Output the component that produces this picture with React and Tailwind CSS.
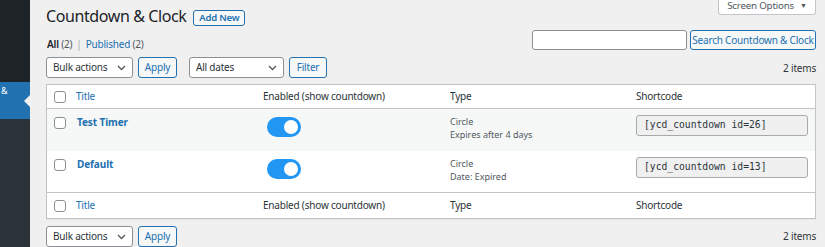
import React from "react";

const font = { fontFamily: '"Noto Sans", "Open Sans", sans-serif' };

function Chevron() {
  return (
    <svg width="9" height="6" viewBox="0 0 9 6" fill="none" className="shrink-0">
      <path d="M1 1l3.5 3.5L8 1" stroke="#50575e" strokeWidth="1.3" />
    </svg>
  );
}

function Select({ label, w }) {
  return (
    <div className={`flex items-center justify-between h-[21px] pl-[6px] pr-[6px] bg-white border border-[#8c8f94] rounded-[3px] text-[10px] tracking-[-0.2px] text-[#2c3338] ${w}`}>
      <span>{label}</span>
      <Chevron />
    </div>
  );
}

function Btn({ children, cls = "" }) {
  return (
    <div className={`flex items-center justify-center whitespace-nowrap bg-[#f6f7f7] border border-[#2271b1] rounded-[3px] text-[10px] tracking-[-0.2px] text-[#2271b1] ${cls}`}>
      {children}
    </div>
  );
}

function Checkbox() {
  return <div className="w-[12px] h-[12px] bg-white border border-[#8c8f94] rounded-[3px]" />;
}

function Toggle() {
  return (
    <div className="w-[34px] h-[20px] rounded-full bg-[#2196f3] flex items-center justify-end pr-[3px]">
      <div className="w-[14px] h-[14px] rounded-full bg-white" />
    </div>
  );
}

const cols = "grid grid-cols-[29px_187px_187px_186px_1fr]";

function HeadRow({ border }) {
  return (
    <div className={`${cols} h-[24px] items-center text-[10px] tracking-[-0.2px] ${border}`}>
      <div className="pl-[7px]"><Checkbox /></div>
      <div className="text-[#2271b1]">Title</div>
      <div className="text-[#2c3338]">Enabled (show countdown)</div>
      <div className="text-[#2c3338]">Type</div>
      <div className="text-[#2c3338]">Shortcode</div>
    </div>
  );
}

function Row({ title, line2, id, bg }) {
  return (
    <div className={`${cols} items-start ${bg}`}>
      <div className="pl-[7px] pt-[8px]"><Checkbox /></div>
      <div className="pt-[6px] pl-[1px] leading-[14px] text-[10px] font-bold tracking-[-0.1px] text-[#2271b1]">{title}</div>
      <div className="pt-[8px] pl-[4px]"><Toggle /></div>
      <div className="pt-[6px] text-[9px] leading-[13px] text-[#50575e]">
        <div>Circle</div>
        <div>{line2}</div>
      </div>
      <div className="pt-[6px]">
        <div
          className="w-[172px] h-[21px] flex items-center pl-[7px] bg-[#f0f0f1] border border-[#a7aaad] rounded-[3px] text-[9.7px] text-[#2c3338]"
          style={{ fontFamily: '"DejaVu Sans Mono", "Liberation Mono", monospace' }}
        >
          [ycd_countdown id={id}]
        </div>
      </div>
    </div>
  );
}

export default function App() {
  return (
    <div className="flex w-[825px] h-[247px] overflow-hidden bg-[#f0f0f1]" style={font}>
      {/* sidebar */}
      <div className="relative w-[30px] shrink-0 flex flex-col">
        <div className="h-[82px] bg-[#1d2327]" />
        <div className="h-[37px] bg-[#2271b1] overflow-hidden">
          <div className="text-[9px] leading-[12px] text-white ml-[1px] mt-[3px]">&amp;</div>
        </div>
        <div className="flex-1 bg-[#2c3338]" />
        <div className="absolute left-[24px] top-[95px] w-0 h-0 border-y-[6px] border-y-transparent border-r-[6px] border-r-[#f0f0f1]" />
      </div>

      {/* main */}
      <div className="flex-1 pl-[16px] pr-[9px] flex flex-col">
        {/* row A */}
        <div className="h-[31px] flex justify-between items-start">
          <div className="flex items-start">
            <h1 className="mt-[5px] text-[16px] leading-[23px] tracking-[-0.4px] text-[#1d2327] font-normal">Countdown &amp; Clock</h1>
            <div className="ml-[7px] mt-[10px] h-[16px] w-[52px] flex items-center justify-center bg-[#f6f7f7] border border-[#2271b1] rounded-[3px] text-[9.5px] tracking-[-0.2px] font-semibold text-[#2271b1]">
              Add New
            </div>
          </div>
          <div className="h-[15px] w-[98px] bg-white border-x border-b border-[#c3c4c7] rounded-b-[3px] flex items-start justify-center gap-[6px] text-[9.75px] tracking-[-0.2px] leading-[11px] text-[#50575e]">
            <span>Screen Options</span>
            <span className="text-[7px] leading-[11px]">▼</span>
          </div>
        </div>

        {/* row B */}
        <div className="h-[21px] flex justify-between items-end">
          <div className="pl-[1px] text-[10px] tracking-[-0.2px] leading-[14px] text-[#50575e]">
            <span className="font-semibold text-[#1d2327]">All</span> <span>(2)</span>
            <span className="mx-[4px] text-[#a7aaad]">|</span>
            <span className="text-[#2271b1]">Published</span> <span>(2)</span>
          </div>
          <div className="flex items-start h-[21px] gap-[3px]">
            <div className="w-[155px] h-[20px] bg-white border border-[#8c8f94] rounded-[3px]" />
            <Btn cls="w-[126px] h-[20px]">Search Countdown &amp; Clock</Btn>
          </div>
        </div>

        {/* tablenav top */}
        <div className="h-[33px] pt-[6px] flex justify-between items-start">
          <div className="flex items-center">
            <Select label="Bulk actions" w="w-[87px]" />
            <Btn cls="ml-[5px] w-[39px] h-[21px]">Apply</Btn>
            <Select label="All dates" w="ml-[12px] w-[95px]" />
            <Btn cls="ml-[5px] w-[38px] h-[21px]">Filter</Btn>
          </div>
          <div className="text-[10px] tracking-[-0.2px] text-[#2c3338] leading-[21px] pt-[1px]">2 items</div>
        </div>

        {/* table */}
        <div className="bg-white border border-[#c3c4c7] shadow-[0_1px_1px_rgba(0,0,0,0.04)]">
          <HeadRow border="border-b border-[#c3c4c7]" />
          <Row title="Test Timer" line2="Expires after 4 days" id="26" bg="h-[42px] bg-[#f6f7f7]" />
          <Row title="Default" line2="Date: Expired" id="13" bg="h-[41px] bg-white" />
          <div className="border-t border-[#c3c4c7]">
            <HeadRow border="h-[25px]" />
          </div>
        </div>

        {/* tablenav bottom */}
        <div className="pt-[7px] flex justify-between items-start">
          <div className="flex items-center">
            <Select label="Bulk actions" w="w-[87px]" />
            <Btn cls="ml-[5px] w-[39px] h-[21px]">Apply</Btn>
          </div>
          <div className="text-[10px] tracking-[-0.2px] text-[#2c3338] leading-[21px]">2 items</div>
        </div>
      </div>
    </div>
  );
}
